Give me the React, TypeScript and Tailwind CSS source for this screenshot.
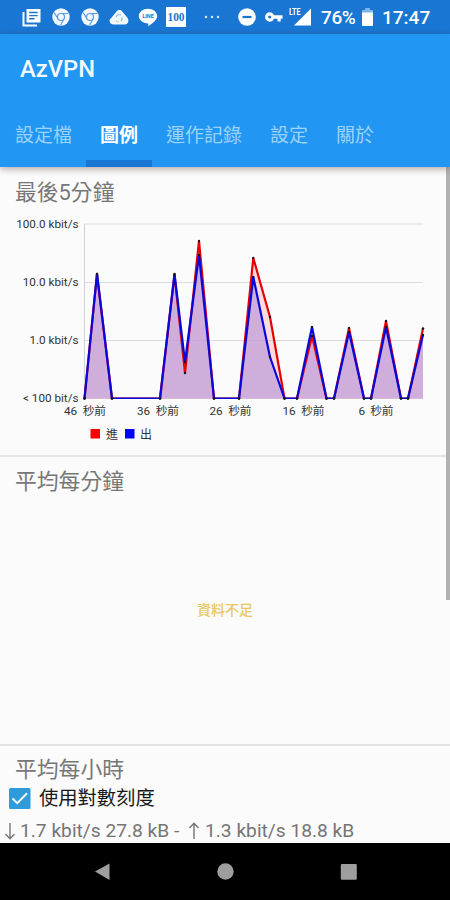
import { ReactNode } from "react";

const BASE_Y = 398.5;

const tabs = ["設定檔", "圖例", "運作記錄", "設定", "關於"];
const activeTab = "圖例";

type Point = [number, number];

const inbound: Point[] = [
  [84.5, BASE_Y], [97, 274], [112, BASE_Y], [160, BASE_Y], [174.5, 275], [185, 373],
  [199, 241], [214, BASE_Y], [239, BASE_Y], [253.3, 258], [270, 317], [284.5, BASE_Y],
  [297, BASE_Y], [312, 336], [326.5, BASE_Y], [334, BASE_Y], [349, 328], [364, BASE_Y],
  [371, BASE_Y], [386, 321], [401, BASE_Y], [408, BASE_Y], [423, 328.5],
];

const outbound: Point[] = [
  [84.5, BASE_Y], [97, 274], [112, BASE_Y], [160, BASE_Y], [174.5, 274], [185, 362],
  [199, 255], [214, BASE_Y], [239, BASE_Y], [253.3, 277], [270, 357], [284.5, BASE_Y],
  [297, BASE_Y], [312, 327], [326.5, BASE_Y], [334, BASE_Y], [349, 332], [364, BASE_Y],
  [371, BASE_Y], [386, 327], [401, BASE_Y], [408, BASE_Y], [423, 335],
];

const yLabels = [
  { y: 224, label: "100.0 kbit/s" },
  { y: 282.5, label: "10.0 kbit/s" },
  { y: 340.5, label: "1.0 kbit/s" },
  { y: 398.5, label: "< 100 bit/s" },
];

const xLabels = [
  { x: 64, width: 42, label: "46  秒前" },
  { x: 137, width: 42, label: "36  秒前" },
  { x: 209.5, width: 42, label: "26  秒前" },
  { x: 282.5, width: 42, label: "16  秒前" },
  { x: 358.5, width: 35, label: "6  秒前" },
];

function toPoints(points: Point[]) {
  return points.map((p) => p.join(",")).join(" ");
}

function ChromeIcon() {
  return (
    <svg viewBox="0 0 18 18" className="size-[18px]">
      <circle cx="9" cy="9" r="8.7" fill="#f2f8ff" />
      <circle cx="9" cy="9" r="3.5" fill="none" stroke="#5c9bdd" strokeWidth="1.2" />
      <path d="M9 5.5h7.4M6 10.8 2.2 4.6M12 10.8 8.6 17.2" stroke="#5c9bdd" strokeWidth="1.1" />
    </svg>
  );
}

function StatusBar() {
  return (
    <div className="flex h-[34px] shrink-0 items-center bg-[#1976d2] text-white">
      <div className="ml-[22px] flex h-[18px] items-center gap-[11px]">
        <svg viewBox="0 0 19 19" className="h-[19px] w-[19px]">
          <path d="M4.5 1h14v13.5h-14z" fill="#fff" />
          <path d="M1.5 4v13.5h13.5" fill="none" stroke="#fff" strokeWidth="2" />
          <path d="M7.2 4.5h8.5M7.2 7.6h8.5M7.2 10.8h5.3" stroke="#1976d2" strokeWidth="1.4" />
        </svg>
        <ChromeIcon />
        <ChromeIcon />
        <svg viewBox="0 0 20 16" className="-mr-[2px] -ml-[1px] h-4 w-5">
          <path d="M4 15.5a3.6 3.6 0 0 1-1.8-6.6L7.5 2.5C9.2.6 11.8.7 13.2 2.5l4.8 5.7c2.7 3 1.3 7.3-2.5 7.3z" fill="#f2f8ff" />
          <path d="M7.2 8.2a2.8 2.8 0 0 1 4.6-2" fill="none" stroke="#8dbbe8" strokeWidth="1.2" />
          <path d="M7 11.5a2.8 2.8 0 0 0 3 1.3" fill="none" stroke="#e8cc8b" strokeWidth="1.2" />
          <path d="M12.7 8.5a2.8 2.8 0 0 1-.9 3.5" fill="none" stroke="#8bc0a8" strokeWidth="1.2" />
        </svg>
        <svg viewBox="0 0 20 19" className="-mr-[1px] h-[19px] w-5">
          <path d="M10 .8c5.1 0 9.2 3.2 9.2 7.3 0 4-5.2 7.9-9.2 10.3.5-1.4.5-2.6 0-3C4.9 15.4.8 12.2.8 8.1.8 4 4.9.8 10 .8z" fill="#fff" />
          <text x="10" y="10.3" textAnchor="middle" fontSize="5.5" fontWeight="700" fill="#1976d2" fontFamily="Roboto, sans-serif">LINE</text>
        </svg>
        <svg viewBox="0 0 20 20" className="-ml-[2px] size-5">
          <path d="M0 0h20v20H0z" fill="#fff" />
          <text x="10" y="14" textAnchor="middle" textLength="17" lengthAdjust="spacingAndGlyphs" fontSize="12" fontWeight="700" fill="#1976d2" fontFamily="Liberation Serif, serif">100</text>
        </svg>
      </div>
      <svg viewBox="0 0 16 4" className="ml-[18px] h-1 w-4">
        <circle cx="2" cy="2" r="1.2" fill="#d9eaff" />
        <circle cx="8" cy="2" r="1.2" fill="#d9eaff" />
        <circle cx="14" cy="2" r="1.2" fill="#d9eaff" />
      </svg>
      <svg viewBox="0 0 18 18" className="ml-[18px] size-[18px]">
        <circle cx="9" cy="9" r="8.8" fill="#fff" />
        <path d="M4.5 9h9" stroke="#1976d2" strokeWidth="2.2" />
      </svg>
      <svg viewBox="0 0 19 12" className="ml-2 h-3 w-[19px]">
        <path d="M5.7 1.3a4.7 4.7 0 1 0 0 9.4c2 0 3.5-1.2 4.2-3h3.6v2.8h3.2V7.7h1.8V4.3H9.9a4.5 4.5 0 0 0-4.2-3z" fill="#fff" />
        <circle cx="5.7" cy="6" r="1.6" fill="#1976d2" />
      </svg>
      <svg viewBox="0 0 23 20" className="ml-[6px] h-5 w-[23px]">
        <path d="M22 1.5v17H5z" fill="#fff" />
        <path d="M0 0h12v9H0z" fill="#1976d2" />
        <text x="0" y="7.8" textLength="11.5" lengthAdjust="spacingAndGlyphs" fontSize="9" fontWeight="700" fill="#fff" fontFamily="Roboto, sans-serif">LTE</text>
      </svg>
      <span className="ml-[9px] w-[37px] pt-[2px] text-[19px] font-medium tracking-[-0.4px]">76%</span>
      <svg viewBox="0 0 11 18" className="ml-[4px] h-[18px] w-[11px]">
        <path d="M3 0h5v2h3v3H0V2h3z" fill="#7fb2e7" />
        <path d="M0 4.5h11v12.7a.8.8 0 0 1-.8.8H.8a.8.8 0 0 1-.8-.8z" fill="#fff" />
      </svg>
      <span className="ml-[9px] pt-[2px] text-[19px] font-medium">17:47</span>
    </div>
  );
}

function AppBar() {
  return (
    <header className="z-10 flex h-[133px] shrink-0 flex-col justify-between bg-[#2196f3] shadow-[0_2px_7px_rgba(70,40,40,0.4)]">
      <h1 className="pt-[19px] pl-5 text-[23.7px] leading-8 font-medium text-[#f3faff]">AzVPN</h1>
      <nav className="flex h-[66px] pl-px text-[19px]">
        {tabs.map((tab) => (
          <div
            key={tab}
            className={`flex flex-col justify-between px-[14px] pt-[21px] leading-7 ${
              tab === activeTab
                ? "border-b-[7px] border-[#1976d2] font-bold text-white"
                : "text-[#9bd3fb]"
            }`}
          >
            {tab}
          </div>
        ))}
      </nav>
    </header>
  );
}

function TrafficChart() {
  return (
    <svg viewBox="0 210 445 240" className="block h-60 w-[445px]" fontFamily="Roboto, 'Noto Sans CJK TC', sans-serif">
      <clipPath id="plot">
        <rect x="80" y="220" width="344" height="179" />
      </clipPath>
      {yLabels.map(({ y, label }) => (
        <g key={label}>
          <path d={`M84.5 ${y}H423`} stroke="#dcdcdc" />
          <text x="78.5" y={y + 3.7} textAnchor="end" fontSize="11.7" fill="#333">{label}</text>
        </g>
      ))}
      <path d="M84.5 224V398.5" stroke="#d2d2d2" />
      <g clipPath="url(#plot)">
        <polygon points={`${toPoints(inbound)} 423,${BASE_Y}`} fill="#ff0000" fillOpacity="0.12" />
        <polygon points={`${toPoints(outbound)} 423,${BASE_Y}`} fill="#c6a2dc" fillOpacity="0.8" />
        <polyline points={toPoints(inbound)} fill="none" stroke="#e60000" strokeWidth="2.2" strokeLinejoin="bevel" />
        <polyline points={toPoints(outbound)} fill="none" stroke="#0808dc" strokeWidth="2.2" strokeLinejoin="bevel" />
      </g>
      {[...inbound, ...outbound].map(([x, y], i) => (
        <circle key={i} cx={x} cy={y} r="1.2" fill="#151525" />
      ))}
      {xLabels.map(({ x, width, label }) => (
        <text key={label} x={x} y="415" textLength={width} fontSize="11.7" fill="#333" className="whitespace-pre">{label}</text>
      ))}
      <path d="M90.5 429h9.5v9.5h-9.5z" fill="#f00" />
      <text x="106" y="438.5" fontSize="12" fill="#333">進</text>
      <path d="M125 429h9.5v9.5H125z" fill="#00f" />
      <text x="140" y="438.5" fontSize="12" fill="#333">出</text>
    </svg>
  );
}

function Section({ title, className, children }: { title: string; className: string; children?: ReactNode }) {
  return (
    <section className={className}>
      <h2 className="pl-[15px] text-[21.8px] leading-8 text-[#777]">{title}</h2>
      {children}
    </section>
  );
}

export default function App() {
  return (
    <div className="flex h-[900px] w-[450px] flex-col overflow-hidden bg-[#fbfbfb] font-[Roboto,'Noto_Sans_CJK_TC',sans-serif]">
      <StatusBar />
      <AppBar />
      <main className="relative h-[676px] shrink-0 overflow-hidden">
        <Section title="最後5分鐘" className="h-[290px] border-b-2 border-[#e5e5e5] pt-[10px]">
          <div className="pt-px">
            <TrafficChart />
          </div>
        </Section>
        <Section title="平均每分鐘" className="h-[289px] border-b-2 border-[#e2e2e2] pt-[9px]">
          <p className="pt-[100px] text-center text-[14px] leading-6 font-medium text-[#eac75c]">資料不足</p>
        </Section>
        <Section title="平均每小時" className="pt-[8px]">
          <div className="-mt-px flex h-7 items-center pl-[9px]">
            <svg viewBox="0 0 22 22" className="size-[22px]">
              <rect width="21.5" height="21" rx="1.5" fill="#2f9bd8" />
              <path d="m3.5 10.5 4.8 4.7L18 5.3" fill="none" stroke="#fff" strokeWidth="2" />
            </svg>
            <span className="ml-[8px] text-[19.3px] text-[#181818]">使用對數刻度</span>
          </div>
          <div className="flex h-9 items-center pl-[4px] text-[19.2px] text-[#757575]">
            <svg viewBox="0 0 12 18" className="mr-[4px] h-[18px] w-3">
              <path d="M6 1v16M1.5 12 6 16.7 10.5 12" fill="none" stroke="#757575" strokeWidth="1.4" />
            </svg>
            <span className="w-[163px] whitespace-nowrap">1.7 kbit/s 27.8 kB -</span>
            <svg viewBox="0 0 12 18" className="mx-[5px] h-[18px] w-3">
              <path d="M6 17V1M1.5 6 6 1.3 10.5 6" fill="none" stroke="#757575" strokeWidth="1.4" />
            </svg>
            <span className="whitespace-nowrap">1.3 kbit/s 18.8 kB</span>
          </div>
        </Section>
        <div className="absolute top-0 right-0 h-[433px] w-1 bg-[#b2b2b2]" />
      </main>
      <footer className="flex flex-1 items-center bg-black">
        <svg viewBox="0 0 450 57" className="h-[57px] w-[450px]" fill="#9e9e9e">
          <path d="M95 28.5 109.5 20.5v16.5z" />
          <circle cx="225.5" cy="28.5" r="8.2" />
          <rect x="340.8" y="21" width="16" height="15.7" rx="1" />
        </svg>
      </footer>
    </div>
  );
}
